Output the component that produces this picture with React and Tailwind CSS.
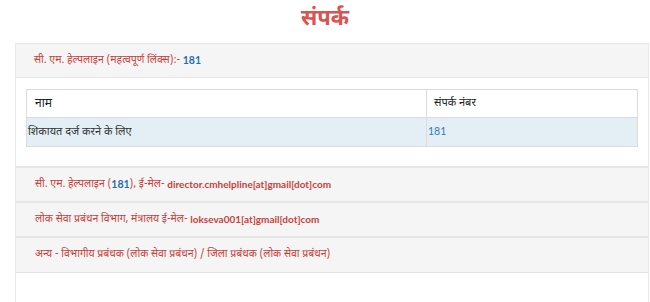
import React from 'react';

const hindi = { fontFamily: '"Noto Sans Devanagari", "Noto Sans", "Open Sans", sans-serif' };
const latin = { fontFamily: 'Lato, "Open Sans", sans-serif' };

function Head({ children, last }) {
  return (
    <div className={`h-[35px] flex items-center pl-[19px] bg-[#f5f5f5] text-[10.5px] text-[#c9403b] ${last ? 'border-b border-[#e2e2e2]' : 'border-b-2 border-[#e6e6e6]'}`}>
      {children}
    </div>
  );
}

export default function App() {
  return (
    <div className="w-[650px] h-[302px] bg-white overflow-hidden" style={hindi}>
      <h1 className="text-center text-[22px] font-bold text-[#d9534f] leading-none pt-[9px] h-[43px]">संपर्क</h1>

      <div className="ml-[15px] mr-[1px] border border-[#e8e8e8] border-b-0 h-[260px]">
        {/* CM helpline */}
        <div className="h-[34px] flex items-center pl-[18px] bg-[#f5f5f5] border-b border-[#e6e6e6] text-[10.5px] text-[#c9403b]">
          सी. एम. हेल्पलाइन (महत्वपूर्ण लिंक्स):-&nbsp;
          <span className="text-[#1f6fb2] font-bold text-[10.5px]" style={latin}>181</span>
        </div>

        <div className="px-[10px] pt-[11px] pb-[19px] border-b-2 border-[#e6e6e6]">
          <table className="w-full border-collapse text-[11px]">
            <thead>
              <tr className="h-[28px]">
                <th className="border border-[#dcdcdc] text-left font-normal text-[#222] text-[12px] pl-[8px] w-[400px]">नाम</th>
                <th className="border border-[#dcdcdc] text-left font-normal text-[#222] pl-[7px]">संपर्क नंबर</th>
              </tr>
            </thead>
            <tbody>
              <tr className="h-[29px] bg-[#e4eff5]">
                <td className="border border-[#dcdcdc] pl-[1px] text-[#333]">शिकायत दर्ज करने के लिए</td>
                <td className="border border-[#dcdcdc] pl-[1px] text-[#337ab7] text-[10.5px]" style={latin}>181</td>
              </tr>
            </tbody>
          </table>
        </div>

        <Head>
          सी. एम. हेल्पलाइन (<span className="text-[#1f6fb2] font-bold" style={latin}>181</span>), ई-मेल-&nbsp;
          <span className="font-bold text-[10px]" style={latin}>director.cmhelpline[at]gmail[dot]com</span>
        </Head>
        <Head>
          लोक सेवा प्रबंधन विभाग, मंत्रालय ई-मेल-&nbsp;
          <span className="font-bold text-[10px]" style={latin}>lokseva001[at]gmail[dot]com</span>
        </Head>
        <Head last>
          अन्य - विभागीय प्रबंधक (लोक सेवा प्रबंधन) / जिला प्रबंधक (लोक सेवा प्रबंधन)
        </Head>
      </div>
    </div>
  );
}
